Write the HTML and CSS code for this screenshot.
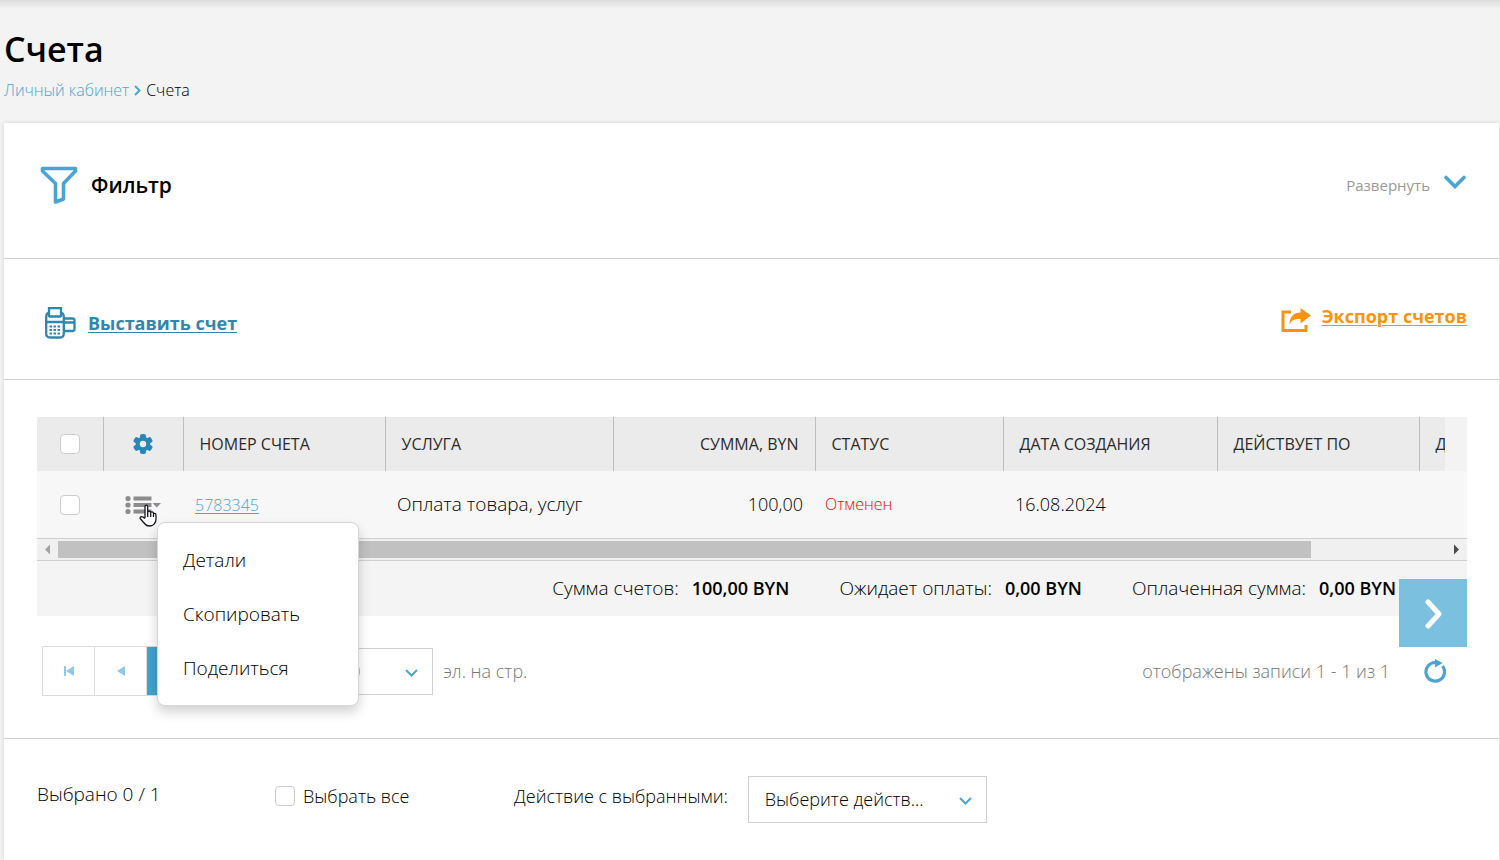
FILE: index.html
```html
<!DOCTYPE html>
<html lang="ru">
<head>
<meta charset="utf-8">
<title>Счета</title>
<link rel="stylesheet" href="styles.css">
</head>
<body>
<header class="page-head">
  <h1 class="page-title">Счета</h1>
  <nav class="crumbs">
    <a class="crumb-link" href="#">Личный кабинет</a>
    <svg class="crumb-sep" width="7" height="11" viewBox="0 0 7 11"><path d="M1 1l4.500 4.500L1 10" fill="none" stroke="#4aa5d2" stroke-width="2"/></svg>
    <span>Счета</span>
  </nav>
</header>
<main class="card">
  <section class="section filter">
    <svg width="38" height="38" viewBox="0 0 38 38"><path d="M2.500 2.500H35.500V5L23.500 17.500V33L15.500 36V17.500L2.500 5Z" fill="none" stroke="#4aa5d2" stroke-width="3.600" stroke-linejoin="round"/></svg>
    <h2 class="filter-title">Фильтр</h2>
    <button class="expand" type="button">Развернуть
      <svg class="expand-icon" width="22" height="14" viewBox="0 0 22 14"><path d="M2 2.500l9 9 9-9" fill="none" stroke="#4aa5d2" stroke-width="3.600" stroke-linecap="round"/></svg>
    </button>
  </section>
  <section class="section links">
    <a class="bill-link" href="#">
      <svg width="31" height="32" viewBox="0 0 31 32" fill="none" stroke="#2f86af" stroke-width="2.300">
        <path d="M4 5.500C2 6 1.200 8 1.200 10V26.500Q1.200 30.500 5 30.500H15Q18.800 30.500 18.800 26.500V10C18.800 8 18 6 16 5.500" />
        <path d="M4 10V1.200H16V10M4 9.500H16M1 15H19"/>
        <path d="M19 11.500H27.500Q29.500 11.500 29.500 13.500V22Q29.500 24 27.500 24H19M19 15.500H30"/>
        <path d="M4.500 19.500H16.500M4.500 23H16.500M4.500 26.500H16.500" stroke-dasharray="2.500 1.500" stroke-width="2.200"/>
      </svg>
      <span class="link-text">Выставить счет</span>
    </a>
    <a class="export-link" href="#">
      <svg width="30" height="24" viewBox="0 0 30 24"><path d="M10 4H2V22.500H25V17" fill="none" stroke="#fb930f" stroke-width="3"/><path d="M19.500 0L30 7.500L19.500 15.500V11C14 10.500 10.500 12 8.500 16.500C8.500 9 12.500 4.500 19.500 4.500Z" fill="#fb930f"/></svg>
      <span class="link-text">Экспорт счетов</span>
    </a>
  </section>
  <section class="section list">
    <div class="grid">
      <div class="grid-head">
        <table class="table head-table">
          <colgroup><col class="c-check"><col class="c-act"><col class="c-num"><col class="c-serv"><col class="c-sum"><col class="c-stat"><col class="c-date"><col class="c-till"><col class="c-rest"></colgroup>
          <thead><tr>
            <th class="center"><input class="check" type="checkbox" aria-label="Выбрать все строки"></th>
            <th class="center"><button class="icon-btn" type="button" aria-label="Настройки">
              <svg width="20" height="20" viewBox="0 0 20 20"><g fill="#2b86b3"><circle cx="10" cy="10" r="7.300"/><rect x="7" y="0" width="6" height="20" rx="2"/><rect x="7" y="0" width="6" height="20" rx="2" transform="rotate(60 10 10)"/><rect x="7" y="0" width="6" height="20" rx="2" transform="rotate(120 10 10)"/></g><circle cx="10" cy="10" r="3.200" fill="#ebebeb"/></svg>
            </button></th>
            <th>НОМЕР СЧЕТА</th><th>УСЛУГА</th><th class="right">СУММА, BYN</th><th>СТАТУС</th><th>ДАТА СОЗДАНИЯ</th><th>ДЕЙСТВУЕТ ПО</th><th>Д</th>
          </tr></thead>
        </table>
      </div>
      <div class="grid-body">
        <table class="table body-table">
          <colgroup><col class="c-check"><col class="c-act"><col class="c-num"><col class="c-serv"><col class="c-sum"><col class="c-stat"><col class="c-date"><col class="c-till"><col class="c-rest"></colgroup>
          <tbody><tr>
            <td class="center"><input class="check" type="checkbox" aria-label="Выбрать счет 5783345"></td>
            <td class="center"><button class="icon-btn" type="button" aria-label="Действия">
              <svg width="36" height="20" viewBox="0 0 36 20" fill="#8c8c8c"><circle cx="3" cy="3.500" r="2.600"/><circle cx="3" cy="10" r="2.600"/><circle cx="3" cy="16.500" r="2.600"/><path d="M8.500 1.500h18v4h-18zM8.500 8h18v4h-18zM8.500 14.500h18v4h-18zM27.500 8h8.500l-4.300 4.500z"/></svg>
            </button></td>
            <td><a class="num-link" href="#">5783345</a></td><td class="service">Оплата товара, услуг</td><td class="right">100,00</td><td class="cancelled">Отменен</td><td>16.08.2024</td><td></td><td></td>
          </tr></tbody>
        </table>
      </div>
      <div class="scroll">
        <svg width="21" height="17" viewBox="0 0 21 17"><path d="M13 3.500v10L8 8.500z" fill="#a3a3a3"/></svg>
        <div class="track"><div class="thumb"></div></div>
        <svg width="21" height="17" viewBox="0 0 21 17"><path d="M8 3.500v10l5-5z" fill="#4a4a4a"/></svg>
      </div>
      <div class="totals">
        <span>Сумма счетов: <b class="amount">100,00 BYN</b></span>
        <span>Ожидает оплаты: <b class="amount">0,00 BYN</b></span>
        <span>Оплаченная сумма: <b class="amount">0,00 BYN</b></span>
      </div>
      <svg class="cursor" width="19" height="23" viewBox="0 0 19 23"><path d="M6 14V3Q6 1.200 7.300 1.200T8.700 3V9Q8.700 7.200 10.200 7.200T11.700 9Q11.800 7.700 13.200 7.900T14.500 10Q14.800 9.200 15.900 9.400T17 11.500V15Q17 18 15.500 19.500Q14 22 10.500 22Q7.500 22 6 20L1.300 14.800Q.8 13.500 1.800 12.900T4 13L6 14.500M8.700 9V13M11.700 9.500V13M14.500 10.500V13" fill="#fff" stroke="#15151c" stroke-width="1.300" stroke-linejoin="round"/></svg>
      <ul class="menu">
        <li><button class="menu-item" type="button">Детали</button></li>
        <li><button class="menu-item" type="button">Скопировать</button></li>
        <li><button class="menu-item" type="button">Поделиться</button></li>
      </ul>
      <button class="side-next" type="button" aria-label="Прокрутить вправо">
        <svg width="20" height="32" viewBox="0 0 20 32"><path d="M5 5L16 17L5 29" fill="none" stroke="#fff" stroke-width="5" stroke-linecap="round" stroke-linejoin="round"/></svg>
      </button>
    </div>
    <div class="pager">
      <div class="pages">
        <button class="page-btn" type="button" aria-label="Первая страница"><svg width="10" height="10" viewBox="0 0 10 10" fill="#8fc9e4"><path d="M0 0h2v10H0zM10 0v10L2 5z"/></svg></button>
        <button class="page-btn" type="button" aria-label="Предыдущая страница"><svg width="8" height="10" viewBox="0 0 8 10" fill="#8fc9e4"><path d="M8 0v10L0 5z"/></svg></button>
        <button class="page-btn current" type="button">1</button>
        <button class="page-btn" type="button" aria-label="Следующая страница"><svg width="8" height="10" viewBox="0 0 8 10" fill="#8fc9e4"><path d="M0 0v10l8-5z"/></svg></button>
        <button class="page-btn" type="button" aria-label="Последняя страница"><svg width="10" height="10" viewBox="0 0 10 10" fill="#8fc9e4"><path d="M8 0h2v10H8zM0 0v10l8-5z"/></svg></button>
      </div>
      <label class="per-page"><span class="select-box size"><select class="select size-select"><option>20</option></select><svg class="arrow" width="13" height="8" viewBox="0 0 13 8"><path d="M1 1l5.500 5.500L12 1" fill="none" stroke="#4aa5d2" stroke-width="2"/></svg></span>эл. на стр.</label>
      <span class="shown">отображены записи 1 - 1 из 1</span>
      <button class="icon-btn refresh" type="button" aria-label="Обновить">
        <svg width="22" height="24" viewBox="0 0 22 24"><path d="M11 3.500A9.300 9.300 0 1 0 18.500 7" fill="none" stroke="#4aa5d2" stroke-width="3.200"/><path d="M11 0L18.500 4L11 8.500Z" fill="#4aa5d2"/></svg>
      </button>
    </div>
  </section>
  <section class="section bulk">
    <span class="picked">Выбрано 0 / 1</span>
    <label class="all"><input class="check" type="checkbox">Выбрать все</label>
    <label class="action">Действие с выбранными:<span class="select-box act"><select class="select"><option>Выберите действ...</option></select><svg class="arrow" width="13" height="8" viewBox="0 0 13 8"><path d="M1 1l5.500 5.500L12 1" fill="none" stroke="#4aa5d2" stroke-width="2"/></svg></span></label>
  </section>
</main>
</body>
</html>
```
FILE: styles.css
```css
* { box-sizing: border-box; }
body {
  margin: 0;
  min-height: 100vh;
  display: flex;
  flex-direction: column;
  overflow: hidden;
  background: #f3f3f3;
  color: #000;
  font: 300 18px/24px "Open Sans", sans-serif;
}
button, select { font: inherit; color: inherit; }
svg { display: block; flex: none; }

.page-head {
  padding: 25px 4px 20px;
  background: linear-gradient(#dcdcdc, #f3f3f3 9px);
}
.page-title { margin: 0; font-size: 34px; line-height: 48px; font-weight: 600; }
.crumbs { display: flex; align-items: center; gap: 5px; margin-top: 5px; font-size: 16px; line-height: 25px; }
.crumb-link { color: #4aa5d2; text-decoration: none; }

.card {
  flex: 1;
  margin: 0 1px 0 4px;
  background: #fff;
  box-shadow: 0 0 4px rgba(0, 0, 0, .14);
}
.section { padding: 37px 32px 0 33px; border-bottom: 1px solid #d0d0d0; }
.section:last-child { border-bottom: 0; }

.filter { display: flex; align-items: center; padding: 39px 33px 50px 36px; }
.filter-title { margin: 0 0 0 13px; padding-top: 1px; font-size: 21px; line-height: 45px; font-weight: 600; }
.expand {
  display: flex;
  gap: 14px;
  margin-left: auto;
  padding: 0;
  border: 0;
  background: none;
  color: #999;
  font-size: 15px;
  font-weight: 400;
}
.expand-icon { margin-top: 2px; }

.links { display: flex; align-items: flex-start; justify-content: space-between; padding: 44px 32px 37px 41px; }
.bill-link, .export-link { display: flex; font-weight: 700; text-decoration: none; }
.link-text { text-decoration: underline; text-decoration-thickness: 1px; text-underline-offset: 2px; }
.bill-link { align-items: center; gap: 12px; padding-top: 1px; color: #2f86af; line-height: 38px; }
.export-link { align-items: center; gap: 11px; height: 25px; color: #fb930f; }
.export-link svg { margin-top: 8px; }

.list { padding-bottom: 42px; }
.grid { position: relative; }
.grid-head { overflow: hidden; background: #f3f3f3; border-right: 22px solid #f3f3f3; }
.table { width: 1446px; table-layout: fixed; border-collapse: collapse; }
.c-check { width: 66px; }
.c-act { width: 80px; }
.c-num, .c-sum, .c-till { width: 202px; }
.c-serv { width: 228px; }
.c-stat { width: 188px; }
.c-date { width: 214px; }
.c-rest { width: 64px; }
.table th {
  height: 54px;
  padding: 0 16px;
  border-left: 1px solid #bdbdbd;
  background: #ebebeb;
  color: #2b2b2b;
  font-size: 16px;
  font-weight: 400;
  text-align: left;
}
.table th:first-child { border-left: 0; }
.grid-body { overflow: hidden; background: #f7f7f7; border-bottom: 1px solid #cfcfcf; }
.table td { height: 67px; padding: 0 12px 1px; font-size: 18px; font-weight: 300; }
.table td.service { font-size: 19px; }
.table .right { text-align: right; }
.table .center { padding: 0; text-align: center; }
.table td.cancelled { padding-left: 10px; color: #f00; font-size: 16px; }
.num-link { color: #4aa5d2; font-size: 16px; text-underline-offset: 2px; }
.check {
  appearance: none;
  flex: none;
  width: 20px;
  height: 20px;
  margin: 0;
  border: 1px solid #ccc;
  border-radius: 4px;
  background: #fff;
}
.icon-btn { padding: 0; border: 0; background: none; }
.center .check, .center .icon-btn { display: block; margin: 0 auto; }

.scroll { display: flex; align-items: center; padding: 2px 0; background: #f0f0f0; border-bottom: 1px solid #cfcfcf; }
.track { flex: 1; }
.thumb { width: 90.3%; height: 17px; background: #c1c1c1; }
.totals {
  display: flex;
  justify-content: flex-end;
  gap: 50px;
  padding: 15px 71px 16px 16px;
  background: #f4f4f4;
  font-size: 19px;
}
.amount { margin-left: 8px; font-size: 18px; font-weight: 600; }

.cursor { position: absolute; left: 102px; top: 87px; z-index: 3; }
.menu {
  position: absolute;
  left: 120px;
  top: 105px;
  z-index: 2;
  width: 202px;
  margin: 0;
  padding: 10px 0;
  list-style: none;
  border: 1px solid #d6d6d6;
  border-radius: 8px;
  background: #fff;
  box-shadow: 0 6px 12px rgba(0, 0, 0, .18);
}
.menu-item {
  display: block;
  width: 100%;
  padding: 15px 25px;
  border: 0;
  background: none;
  font-size: 19px;
  text-align: left;
}
.side-next {
  position: absolute;
  right: 0;
  top: 162px;
  display: flex;
  align-items: center;
  justify-content: center;
  width: 68px;
  height: 68px;
  border: 0;
  background: #7bc0df;
}

.pager { display: flex; align-items: center; padding: 30px 21px 0 5px; color: #777; }
.pages { display: flex; border: 1px solid #dcdcdc; }
.page-btn {
  display: flex;
  align-items: center;
  justify-content: center;
  width: 52px;
  height: 48px;
  padding: 0;
  border: 0;
  border-right: 1px solid #dcdcdc;
  background: #fff;
}
.page-btn:last-child { border-right: 0; }
.current { background: #41a3cf; color: #fff; }
.per-page { display: flex; align-items: center; gap: 10px; margin-left: 13px; }
.select-box { display: block; position: relative; }
.size { width: 116px; }
.act { width: 239px; line-height: 24px; }
.select {
  appearance: none;
  display: block;
  width: 100%;
  height: 47px;
  padding: 0 40px 1px 16px;
  border: 1px solid #cfcfcf;
  border-radius: 0;
  background: #fff;
}
.size-select { padding-left: 22px; color: #4aa5d2; }
.arrow { position: absolute; right: 15px; top: 21px; pointer-events: none; }
.shown { margin-left: auto; }
.refresh { margin-left: 34px; }

.bulk { display: flex; align-items: flex-start; line-height: 40px; }
.picked { width: 238px; font-size: 19px; line-height: 36px; }
.all { display: flex; align-items: center; gap: 8px; width: 239px; }
.action { display: flex; align-items: flex-start; gap: 20px; }
```
